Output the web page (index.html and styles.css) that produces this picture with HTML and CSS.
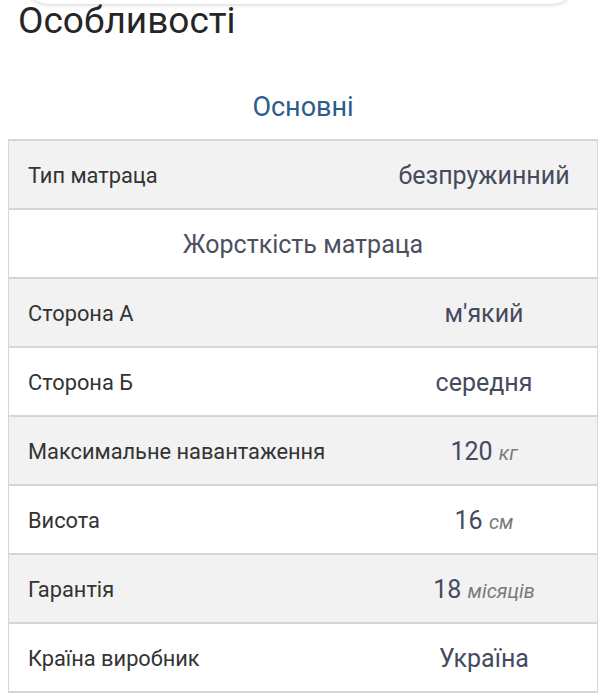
FILE: index.html
```html
<!DOCTYPE html>
<html lang="uk">
<head>
<meta charset="utf-8">
<link rel="stylesheet" href="styles.css">
</head>
<body>
<div class="topbar"></div>
<h1 class="title">Особливості</h1>
<h2 class="section">Основні</h2>
<table class="specs">
  <tr class="odd"><td class="label">Тип матраца</td><td class="value">безпружинний</td></tr>
  <tr class="group"><td colspan="2">Жорсткість матраца</td></tr>
  <tr class="odd"><td class="label">Сторона А</td><td class="value">м'який</td></tr>
  <tr><td class="label">Сторона Б</td><td class="value">середня</td></tr>
  <tr class="odd"><td class="label">Максимальне навантаження</td><td class="value">120 <span class="unit">кг</span></td></tr>
  <tr><td class="label">Висота</td><td class="value">16 <span class="unit">см</span></td></tr>
  <tr class="odd"><td class="label">Гарантія</td><td class="value">18 <span class="unit">місяців</span></td></tr>
  <tr><td class="label">Країна виробник</td><td class="value">Україна</td></tr>
</table>
</body>
</html>
```
FILE: styles.css
```css
html, body {
  margin: 0;
  padding: 0;
  background: #ffffff;
  font-family: Roboto, "Noto Sans", sans-serif;
}
body {
  padding: 0 9px 0 8px;
  overflow: hidden;
}
.topbar {
  height: 44px;
  margin: -40px 24px 0 18px;
  border-radius: 22px;
  background: #ffffff;
  box-shadow: 0 1px 4px rgba(0,0,0,0.18);
}
.title {
  margin: -4px 0 0 10px;
  font-size: 37px;
  line-height: 42px;
  font-weight: 400;
  color: #262626;
}
.section {
  margin: 50px 0 0 0;
  text-align: center;
  font-size: 27px;
  line-height: 30px;
  font-weight: 400;
  color: #2d5b8c;
}
.specs {
  margin-top: 17px;
  width: 590px;
  border-collapse: collapse;
  table-layout: fixed;
}
.specs td {
  height: 65px;
  padding: 2px 0 0 0;
  border: 2px solid #d6d6d6;
  border-left-width: 1.5px;
  border-right-width: 1.5px;
  vertical-align: middle;
}
.specs .label {
  width: 343px;
  padding-left: 19px;
  font-size: 21.8px;
  color: #333333;
  border-right: none;
}
.specs .value {
  text-align: center;
  font-size: 25px;
  color: #464a5e;
  border-left: none;
}
.specs tr.odd td {
  background: #f2f2f2;
}
.specs tr.group td {
  text-align: center;
  font-size: 25px;
  color: #4c4f62;
}
.unit {
  font-style: italic;
  font-size: 20px;
  color: #7a7a7a;
}
```
